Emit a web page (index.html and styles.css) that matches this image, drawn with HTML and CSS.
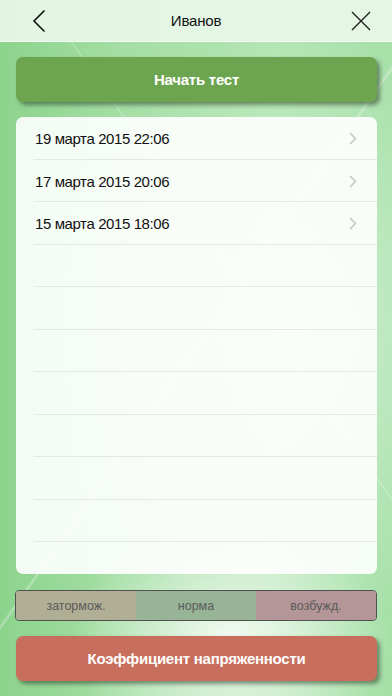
FILE: index.html
```html
<!DOCTYPE html>
<html lang="ru">
<head>
<meta charset="utf-8">
<link rel="stylesheet" href="styles.css">
</head>
<body>
<div class="screen">
  <div class="bg-streaks"></div>
  <header class="navbar">
    <button class="nav-btn back" aria-label="Назад">
      <svg width="14" height="24" viewBox="0 0 14 24"><path d="M12.5 1.5 L2 12 L12.5 22.5" fill="none" stroke="#111" stroke-width="1.6"/></svg>
    </button>
    <div class="nav-title">Иванов</div>
    <button class="nav-btn close" aria-label="Закрыть">
      <svg width="20" height="20" viewBox="0 0 20 20"><path d="M1 1 L19 19 M19 1 L1 19" fill="none" stroke="#222" stroke-width="1.4"/></svg>
    </button>
  </header>
  <main class="content">
    <button class="btn btn-green">Начать тест</button>
    <section class="list">
      <div class="row"><span>19 марта 2015 22:06</span><svg class="chev" width="8" height="13" viewBox="0 0 8 13"><path d="M1 1 L6.5 6.5 L1 12" fill="none" stroke="#c4c8c4" stroke-width="1.5"/></svg></div>
      <div class="row"><span>17 марта 2015 20:06</span><svg class="chev" width="8" height="13" viewBox="0 0 8 13"><path d="M1 1 L6.5 6.5 L1 12" fill="none" stroke="#c4c8c4" stroke-width="1.5"/></svg></div>
      <div class="row"><span>15 марта 2015 18:06</span><svg class="chev" width="8" height="13" viewBox="0 0 8 13"><path d="M1 1 L6.5 6.5 L1 12" fill="none" stroke="#c4c8c4" stroke-width="1.5"/></svg></div>
      <div class="row"></div>
      <div class="row"></div>
      <div class="row"></div>
      <div class="row"></div>
      <div class="row"></div>
      <div class="row"></div>
      <div class="row"></div>
      <div class="row last"></div>
    </section>
    <div class="segments">
      <div class="seg seg-slow">затормож.</div>
      <div class="seg seg-norm">норма</div>
      <div class="seg seg-exc">возбужд.</div>
    </div>
    <button class="btn btn-red">Коэффициент напряженности</button>
  </main>
</div>
</body>
</html>
```
FILE: styles.css
```css
* { box-sizing: border-box; }
html, body { margin: 0; padding: 0; }
body {
  font-family: "Liberation Sans", Arial, sans-serif;
  width: 392px;
  height: 696px;
  overflow: hidden;
}
.screen {
  position: relative;
  width: 392px;
  height: 696px;
  background:
    radial-gradient(ellipse 160px 120px at 230px 640px, rgba(255,255,255,0.85), rgba(255,255,255,0) 100%),
    radial-gradient(ellipse 260px 300px at 300px 330px, rgba(255,255,255,0.4), rgba(255,255,255,0) 100%),
    linear-gradient(90deg, #8cd38c 0%, #a4dea4 30%, #b3e5b3 70%, #a6e0a8 100%);
  display: flex;
  flex-direction: column;
}
.bg-streaks {
  position: absolute;
  inset: 0;
  background:
    linear-gradient(125deg, transparent 49.7%, rgba(255,255,255,0.35) 50%, transparent 50.3%),
    linear-gradient(55deg, transparent 60%, rgba(255,255,255,0.25) 60.2%, transparent 60.4%);
  pointer-events: none;
}
.navbar {
  position: relative;
  height: 42px;
  background: rgba(232, 247, 232, 0.94);
  border-bottom: 1px solid #f4fbf4;
  display: flex;
  align-items: center;
  justify-content: space-between;
  padding: 0 16px 0 32px;
  flex-shrink: 0;
}
.nav-btn {
  border: 0;
  background: none;
  padding: 0;
  display: flex;
  align-items: center;
  width: 24px;
  height: 24px;
}
.nav-btn.close { justify-content: flex-end; margin-right: 5px; }
.nav-title {
  font-size: 15px;
  color: #111;
  position: absolute;
  left: 0; right: 0;
  text-align: center;
  letter-spacing: -0.2px;
  pointer-events: none;
}
.content {
  position: relative;
  display: flex;
  flex-direction: column;
  padding: 15px 15px 0 16px;
}
.btn {
  border: 0;
  width: 361px;
  border-radius: 7px;
  font-family: "Liberation Sans", Arial, sans-serif;
  font-weight: bold;
  font-size: 15px;
  letter-spacing: -0.25px;
  color: #fff;
  box-shadow: 3px 3px 4px rgba(40, 60, 40, 0.55);
}
.btn-green {
  height: 45px;
  background: #6da44f;
}
.list {
  margin-top: 15px;
  width: 361px;
  height: 457px;
  border-radius: 7px;
  background: rgba(255, 255, 255, 0.9);
  padding-left: 18px;
  overflow: hidden;
}
.row {
  height: 42.5px;
  border-bottom: 1px solid #e3e8e3;
  display: flex;
  align-items: center;
  justify-content: space-between;
  padding: 2px 20px 0 1px;
  font-size: 15px;
  letter-spacing: -0.4px;
  color: #111;
}
.row.last { border-bottom: 0; }
.chev { flex-shrink: 0; }
.segments {
  margin-top: 16px;
  width: 362px;
  margin-left: -1px;
  height: 31px;
  border: 1px solid #505050;
  border-radius: 4px;
  overflow: hidden;
  display: grid;
  grid-template-columns: 1fr 1fr 1fr;
}
.seg {
  display: flex;
  align-items: center;
  justify-content: center;
  font-size: 12.5px;
  color: #5a5a5a;
}
.seg-slow { background: #b0ae94; }
.seg-norm { background: #98b496; }
.seg-exc { background: #b49699; }
.btn-red {
  margin-top: 15px;
  height: 45px;
  background: #c86e5c;
}
```
